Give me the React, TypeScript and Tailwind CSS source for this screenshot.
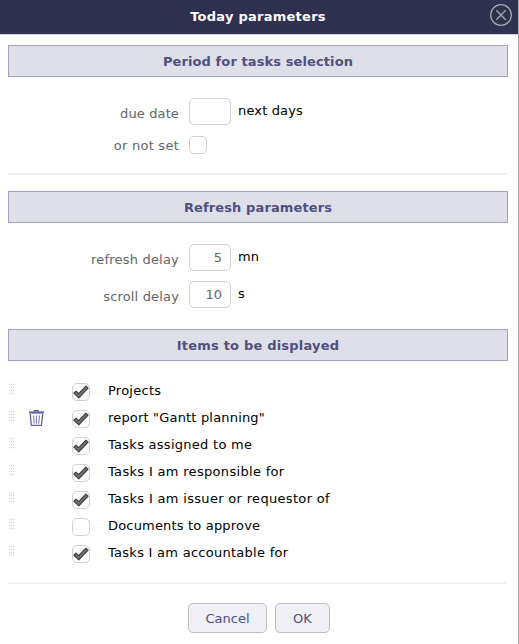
import React from 'react';

const GRIP_ROWS = [1, 4, 7, 10];

function Grip() {
  return (
    <svg width="8" height="12" viewBox="0 0 8 12">
      <rect width="5" height="12" fill="#f9f9f9" />
      {GRIP_ROWS.map((y) => (
        <g key={y} fill="#d6d6d6">
          <rect x="-0.2" y={y} width="1.2" height="1" />
          <rect x="2" y={y} width="1" height="1" />
          <rect x="4" y={y} width="1.2" height="1" />
        </g>
      ))}
    </svg>
  );
}

function Trash() {
  return (
    <svg width="16" height="16" viewBox="0 0 16 16" fill="none" stroke="#6161a6">
      <path d="M0 2.2H15" strokeWidth="1.6" />
      <path d="M0.5 3.5H14.5" stroke="#9c9ccb" strokeWidth="1.1" />
      <path d="M5.3 1.8V0.7H9.2V1.8" strokeWidth="1.4" />
      <path d="M1.2 4L2.4 15.4H12.4L13.7 4" strokeWidth="1.3" />
      <path d="M4.5 5.5L5.2 13.6M7.4 5.5V13.6M10.5 5.5L9.7 13.6" strokeWidth="1.1" stroke="#7b7bb8" />
    </svg>
  );
}

function Check({ on }: { on?: boolean }) {
  return (
    <span className="flex h-[18px] w-[18px] shrink-0 rounded-[5px] border border-[#d0d0d0] bg-white">
      {on && (
        <svg width="16" height="16" viewBox="0 0 16 16">
          <path
            d="M0.8 9.1L3 7.2L5.6 9.7L12.9 2.2L15.1 4.2L5.8 13.9Z"
            fill="#707070"
            stroke="#3c3c3c"
            strokeWidth="1.1"
            strokeLinejoin="round"
          />
        </svg>
      )}
    </span>
  );
}

function Bar({ children, className }: { children: React.ReactNode; className: string }) {
  return (
    <h2 className={'ml-2 h-8 w-[500px] border border-[#a1a1c6] bg-[#dfdfe9] text-center text-[13px] leading-[31px] font-bold text-[#50507f] ' + className}>
      {children}
    </h2>
  );
}

function Field({ label, value, unit, spacing }: { label: string; value: string; unit: string; spacing: string }) {
  return (
    <div className="flex h-[27px]">
      <span className={'w-[179px] pt-[7px] text-right leading-[18px] text-[#656565] ' + spacing}>{label}</span>
      <span className="ml-[10px] h-[27px] w-[42px] rounded-[5px] border border-[#d0d0d0] pr-2 text-right leading-[26px] text-[#656565]">
        {value}
      </span>
      <span className="ml-[7px] pt-1 leading-[18px] tracking-[0.15px]">{unit}</span>
    </div>
  );
}

const ITEMS = [
  { text: 'Projects', on: true, spacing: 'tracking-[0.25px]' },
  { text: 'report "Gantt planning"', on: true, removable: true, spacing: 'tracking-[0.18px]' },
  { text: 'Tasks assigned to me', on: true, spacing: 'tracking-[0.27px]' },
  { text: 'Tasks I am responsible for', on: true, spacing: 'tracking-[0.32px]' },
  { text: 'Tasks I am issuer or requestor of', on: true, spacing: 'tracking-[0.32px]' },
  { text: 'Documents to approve', on: false, spacing: 'tracking-[0.18px]' },
  { text: 'Tasks I am accountable for', on: true, spacing: 'tracking-[0.27px]' },
];

export default function App() {
  return (
    <div className="h-[644px] w-[519px] overflow-hidden border-r border-[#aaaaaa] bg-white font-['Verdana','DejaVu_Sans',sans-serif] text-[13px] text-black">
      <header className="flex h-[35px] border-b border-[#d5d5d8] bg-[#303050]">
        <h1 className="ml-[50px] w-[416px] text-center text-[13px] leading-[33px] font-bold tracking-[0.25px] text-white">Today parameters</h1>
        <svg className="mt-[3px] ml-[23px]" width="24" height="24" viewBox="0 0 24 24" fill="none" stroke="#a4a8ad">
          <circle cx="12" cy="12" r="10.3" strokeWidth="1.3" />
          <path d="M7.3 7.3L16.7 16.7M16.7 7.3L7.3 16.7" strokeWidth="1.3" />
        </svg>
      </header>
      <Bar className="mt-[10px] tracking-[0.1px]">Period for tasks selection</Bar>
      <div className="mt-[21px]">
        <Field label="due date" value="" unit="next days" spacing="tracking-[0.12px]" />
      </div>
      <div className="mt-[11px] flex h-[18px]">
        <span className="w-[179px] pt-px text-right leading-[18px] tracking-[0.25px] text-[#656565]">or not set</span>
        <span className="ml-[10px]">
          <Check />
        </span>
      </div>
      <div className="mt-[19px] ml-2 h-[2px] w-[499px] bg-[#f0f0f0]" />
      <Bar className="mt-4 tracking-[0.12px]">Refresh parameters</Bar>
      <div className="mt-[21px] flex flex-col gap-[10px]">
        <Field label="refresh delay" value="5" unit="mn" spacing="tracking-[0.2px]" />
        <Field label="scroll delay" value="10" unit="s" spacing="tracking-[0.16px]" />
      </div>
      <Bar className="mt-[21px] tracking-[0.2px]">Items to be displayed</Bar>
      <ul className="mt-[22px]">
        {ITEMS.map((item) => (
          <li key={item.text} className="flex h-[27px]">
            <span className="ml-[9px] w-[20px]">
              <Grip />
            </span>
            <span className="w-[43px]">{item.removable && <Trash />}</span>
            <Check on={item.on} />
            <span className={'ml-[18px] -mt-[1px] leading-[18px] whitespace-nowrap ' + item.spacing}>{item.text}</span>
          </li>
        ))}
      </ul>
      <div className="mt-[10px] ml-2 h-[2px] w-[499px] bg-[#f0f0f0]" />
      <div className="mt-[19px] flex gap-2 pl-[188px] text-[#50507f]">
        <button className="h-[30px] w-[79px] rounded-[5px] border border-[#bdbdc2] bg-[#efeff5] leading-[30px]">Cancel</button>
        <button className="h-[30px] w-[55px] rounded-[5px] border border-[#bdbdc2] bg-[#efeff5] leading-[30px]">OK</button>
      </div>
    </div>
  );
}
